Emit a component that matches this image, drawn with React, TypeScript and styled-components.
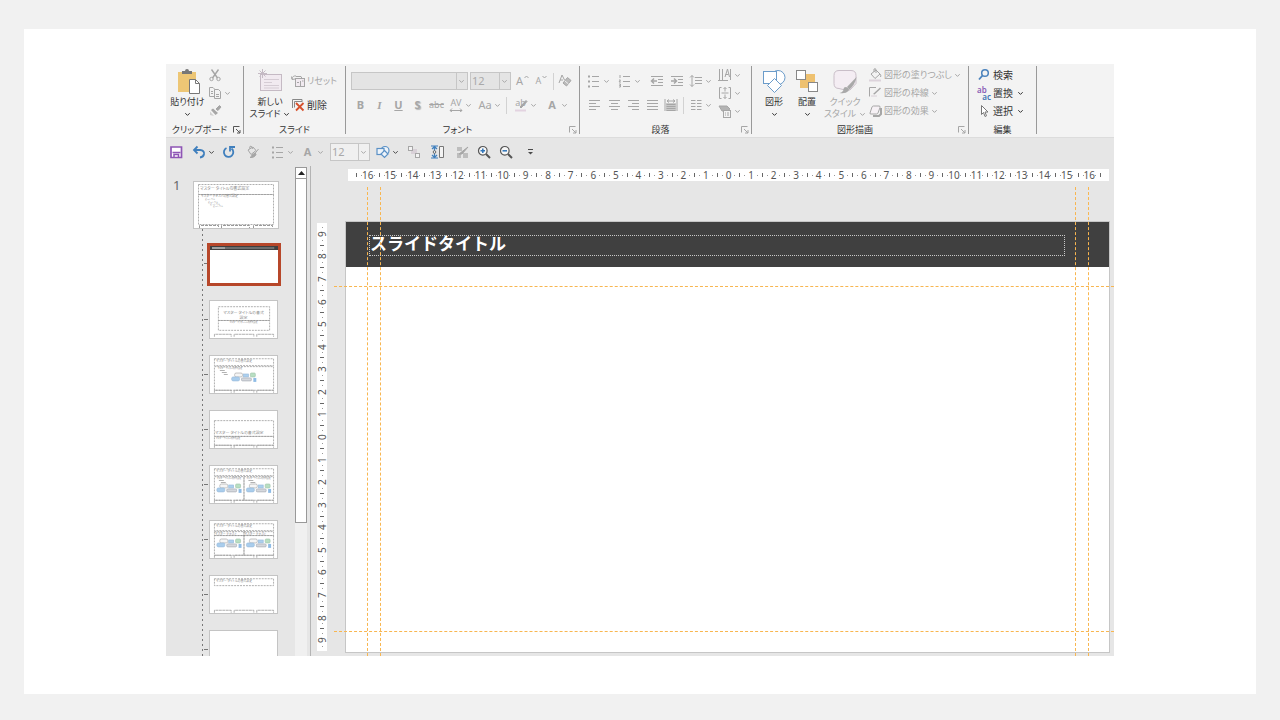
import React from "react";
import styled, { createGlobalStyle } from "styled-components";

const Global = createGlobalStyle`
  *, *::before, *::after { box-sizing: border-box; }
  body {
    margin: 0;
    background: #f1f1f1;
    color: #333;
    font-family: "Noto Sans", "Noto Sans CJK JP", sans-serif;
    font-size: 9px;
    line-height: 12px;
    font-feature-settings: "palt";
  }
  button, select { font: inherit; color: inherit; font-feature-settings: inherit; }
  ul { list-style: none; margin: 0; padding: 0; }
`;

/* ---------- page ---------- */

const Card = styled.main`
  margin: 29px 24px 26px;
  padding: 35px 142px 38px;
  background: #fff;
`;

const Window = styled.div`
  background: #e6e6e6;
`;

/* ---------- ribbon ---------- */

const Ribbon = styled.div`
  display: flex;
  height: 74px;
  background: #f3f3f3;
  border-bottom: 1px solid #dcdcdc;
`;

const Group = styled.section<{ $w: number }>`
  position: relative;
  flex: none;
  display: flex;
  flex-direction: column;
  width: ${(p) => p.$w}px;
  padding-top: 2px;
  &::after {
    content: "";
    position: absolute;
    right: 0;
    top: 2px;
    bottom: 3px;
    border-right: 1px solid #999;
  }
`;

const GroupBody = styled.div<{ $pad?: number }>`
  display: flex;
  flex: 1;
  padding-left: ${(p) => p.$pad ?? 4}px;
`;

const GroupFooter = styled.div`
  display: flex;
  align-items: center;
  height: 14px;
  padding-right: 1px;
`;

const GroupTitle = styled.h2`
  flex: 1;
  margin: 0;
  font-size: 9px;
  font-weight: 400;
  text-align: center;
  white-space: nowrap;
`;

const Launcher = styled.button`
  display: flex;
  width: 10px;
  padding: 0;
  border: 0;
  background: none;
`;

const Rows = styled.div`
  display: flex;
  flex-direction: column;
  gap: 6px;
  padding-top: 6px;
`;

const Stack = styled.div`
  display: flex;
  flex-direction: column;
  align-items: flex-start;
`;

const Row = styled.div`
  display: flex;
  align-items: center;
  height: 18px;
`;

const Divider = styled.span`
  width: 1px;
  height: 17px;
  margin: 0 2px;
  background: #d2d2d2;
`;

const Tool = styled.button<{ $w?: number; $tight?: boolean }>`
  flex: none;
  display: flex;
  align-items: center;
  justify-content: center;
  gap: ${(p) => (p.$tight ? 0 : 2)}px;
  width: ${(p) => p.$w ?? 18}px;
  height: 18px;
  padding: 0;
  border: 0;
  background: none;
  color: #4a4a4a;
  &:disabled { color: #a6a6a6; }
`;

const Item = styled.button`
  display: flex;
  align-items: center;
  gap: 2px;
  height: 18px;
  padding: 0;
  border: 0;
  background: none;
  white-space: nowrap;
  &:disabled { color: #a6a6a6; }
`;

const ItemText = styled.span<{ $large?: boolean }>`
  margin-right: ${(p) => (p.$large ? 2 : 0)}px;
  font-size: ${(p) => (p.$large ? 10 : 9)}px;
`;

const Big = styled.button<{ $w: number }>`
  flex: none;
  display: flex;
  flex-direction: column;
  align-items: center;
  width: ${(p) => p.$w}px;
  padding: 2px 0 0;
  border: 0;
  background: none;
  white-space: nowrap;
  &:disabled { color: #a6a6a6; }
  & > svg:first-child { margin-bottom: 2px; }
`;

const BigLine = styled.span`
  display: flex;
  align-items: center;
  justify-content: center;
  gap: 3px;
  height: 12px;
`;

const Glyph = styled.span<{ $bold?: boolean; $italic?: boolean; $line?: string; $small?: boolean; $w?: number }>`
  width: ${(p) => p.$w ?? 14}px;
  display: flex;
  justify-content: center;
  font-size: ${(p) => (p.$small ? 9 : 11)}px;
  font-weight: ${(p) => (p.$bold ? 700 : 400)};
  font-style: ${(p) => (p.$italic ? "italic" : "normal")};
  text-decoration: ${(p) => p.$line ?? "none"};
`;

const SerifGlyph = styled(Glyph)`
  font-family: "Liberation Serif", serif;
`;

const ShadowGlyph = styled(Glyph)`
  text-shadow: 1px 1px 1px #b5b5b5;
`;

/* Stacks a glyph and its decoration in the same icon cell. */
const Overlay = styled.span`
  display: grid;
  width: 14px;
  height: 14px;
  & > * { grid-area: 1 / 1; }
  & > span { line-height: 10px; }
`;

const SelectBox = styled.label<{ $w: number; $fill?: string }>`
  position: relative;
  display: flex;
  width: ${(p) => p.$w}px;
  height: 18px;
  border: 1px solid #c6c6c6;
  background: ${(p) => p.$fill ?? "#e4e4e4"};
  color: #a9a9a9;
  svg { position: absolute; right: 2px; top: 6px; }
  &::after {
    content: "";
    position: absolute;
    right: 10px;
    top: 0;
    bottom: 0;
    border-left: 1px solid #c6c6c6;
  }
  select {
    width: 100%;
    padding: 0 0 0 1px;
    border: 0;
    background: none;
    appearance: none;
    font-size: 11px;
    color: #a9a9a9;
    opacity: 1;
  }
`;

const FontRow = styled(Row)`
  gap: 2px;
`;

const Flush = styled.div`
  display: flex;
  align-items: center;
`;

/* ---------- quick access bar ---------- */

const QuickBar = styled.div`
  display: flex;
  align-items: center;
  height: 28px;
`;

const QuickSelect = styled.div`
  margin-left: 3px;
`;

/* ---------- workspace ---------- */

const Workspace = styled.div`
  display: flex;
`;

const ThumbPane = styled.nav`
  flex: none;
  display: flex;
  align-items: flex-start;
  width: 129px;
  contain: size;
  overflow: hidden;
`;

const MasterNumber = styled.span`
  width: 27px;
  padding: 12px 0 0 7px;
  font-size: 13px;
  line-height: 14px;
  color: #666;
`;

const Tree = styled.div`
  padding-top: 15px;
`;

const Branch = styled.ul`
  display: flex;
  flex-direction: column;
  gap: 16px;
  margin-left: 9px;
  padding-top: 14px;
  background: repeating-linear-gradient(#777 0 2px, transparent 2px 5px) 0 0 / 1px 100% no-repeat;
`;

const Leaf = styled.li`
  display: flex;
  align-items: center;
  &::before {
    content: "";
    width: 4px;
    margin: 0 1px 0 2px;
    border-top: 1px dashed #777;
  }
`;

const Thumb = styled.button<{ $selected?: boolean }>`
  display: block;
  padding: 0;
  border: ${(p) => (p.$selected ? "3px solid #b7472a" : "1px solid #c4c4c4")};
  margin: ${(p) => (p.$selected ? "0 0 -2px -2px" : "0")};
  background: #fff;
  svg { display: block; }
`;

const ScrollBar = styled.div`
  flex: none;
  display: flex;
  flex-direction: column;
  width: 12px;
  margin: 1px 3px 0 0;
  background: #f0f0f0;
`;

const ScrollButton = styled.button`
  display: flex;
  align-items: center;
  justify-content: center;
  height: 12px;
  padding: 0;
  border: 1px solid #999;
  background: #fff;
`;

const ScrollThumb = styled.div`
  height: 344px;
  border: 1px solid #999;
  border-top: 0;
  background: #fff;
`;

const Editor = styled.div`
  flex: 1;
  display: grid;
  grid-template-columns: 10px 1fr;
  grid-template-rows: 12px auto;
  gap: 41px 19px;
  padding: 3px 5px 4px 6px;
  border-left: 1px solid #b4b4b4;
`;

const RulerH = styled.div`
  grid-column: 2;
  display: flex;
  align-items: center;
  margin-left: 2px;
  padding: 0 8px;
  background: #fff;
`;

const RulerV = styled.div`
  display: flex;
  flex-direction: column;
  align-items: center;
  margin: 1px 0;
  background: #fff;
`;

const Tick = styled.i<{ $v?: boolean }>`
  flex: none;
  width: ${(p) => (p.$v ? 4 : 1)}px;
  height: ${(p) => (p.$v ? 1 : 4)}px;
  background: #666;
`;

const Unit = styled.span<{ $v?: boolean }>`
  flex: 1 1 0;
  display: flex;
  flex-direction: ${(p) => (p.$v ? "column" : "row")};
  align-items: center;
  justify-content: space-between;
  min-width: 0;
  padding: ${(p) => (p.$v ? "4px 0" : "0 4px")};
  &::before, &::after {
    content: "";
    width: 1px;
    height: 1px;
    background: #999;
  }
`;

const Num = styled.span<{ $v?: boolean }>`
  display: flex;
  align-items: center;
  justify-content: center;
  width: ${(p) => (p.$v ? "12px" : "0")};
  height: ${(p) => (p.$v ? "0" : "12px")};
  font-size: 10px;
  color: #555;
  writing-mode: ${(p) => (p.$v ? "vertical-rl" : "horizontal-tb")};
  transform: ${(p) => (p.$v ? "rotate(180deg)" : "none")};
`;

const Slide = styled.article`
  position: relative;
  aspect-ratio: 763 / 430;
  background: #fff;
  box-shadow: 0 0 0 1px #c6c6c6;
`;

const SlideHeader = styled.header`
  height: 45px;
  padding: 13px 44px 0 23px;
  background: #404040;
`;

const SlideTitle = styled.h1`
  height: 21px;
  margin: 0;
  border: 1px dotted #c8c8c8;
  color: #fff;
  font-family: "Noto Sans CJK JP", sans-serif;
  font-feature-settings: normal;
  font-size: 17px;
  font-weight: 700;
  line-height: 13px;
  white-space: nowrap;
`;

const GuideV = styled.i<{ $at: string }>`
  position: absolute;
  left: ${(p) => p.$at};
  top: -35px;
  bottom: -4px;
  border-left: 1px dashed #f8b650;
`;

const GuideH = styled.i<{ $at: string }>`
  position: absolute;
  top: ${(p) => p.$at};
  left: -12px;
  right: -5px;
  border-top: 1px dashed #f8b650;
`;

/* ---------- icons ---------- */

type IconProps = { w?: number; h?: number; children: React.ReactNode };
const Icon = ({ w = 14, h = 14, children }: IconProps) => (
  <svg width={w} height={h} viewBox={`0 0 ${w} ${h}`} fill="none" stroke="currentColor" aria-hidden="true">
    {children}
  </svg>
);

const Chevron = () => (
  <Icon w={7} h={5}>
    <path d="M1.3 1.2 3.5 3.4 5.7 1.2" />
  </Icon>
);

const LaunchIcon = ({ dim }: { dim?: boolean }) => (
  <Icon w={8} h={8}>
    <g stroke={dim ? "#a6a6a6" : "#555"}>
      <path d="M.5 6.5V.5h6M3 3l4 4M7 4v3H4" />
    </g>
  </Icon>
);

const PasteIcon = () => (
  <Icon w={26} h={26}>
    <rect x="3" y="4" width="18" height="20" fill="#edc675" stroke="none" />
    <path d="M7 6V3h3a2 2 0 0 1 4 0h3v3Z" fill="#777" stroke="none" />
    <path d="M14.500 11.500h6l4 4v10h-10Z" fill="#fff" stroke="#777" />
    <path d="M20.500 11.500v4h4" stroke="#777" />
  </Icon>
);
const CutIcon = () => (
  <Icon>
    <path d="M3.5 1.5 9.5 10M10.5 1.5 4.5 10" strokeWidth="1.4" />
    <circle cx="3.5" cy="11" r="1.7" />
    <circle cx="10.5" cy="11" r="1.7" />
  </Icon>
);
const CopyIcon = () => (
  <Icon>
    <path d="M1.500 1.500h3.500l2 2v7h-5.500Z" fill="#f3f3f3" />
    <path d="M6.500 3.500h4l2 2v7h-6Z" fill="#f3f3f3" />
    <path d="M8 8.500h3M8 10.500h3M3 5.500h2M3 7.500h2" />
  </Icon>
);
const BrushIcon = () => (
  <Icon>
    <path d="m8 5 3.500-3.500 1.500 1.500L10 6.500Z" fill="currentColor" />
    <path d="M5 4.500 10 9 7.500 11 3 6Z" fill="currentColor" stroke="none" />
    <path d="M2 7.500 6 12l-4-1Z" fill="#cfcfcf" stroke="none" />
  </Icon>
);
const NewSlideIcon = () => (
  <Icon w={26} h={26}>
    <g stroke="#c5bac4">
      <rect x="3.500" y="6.500" width="21" height="16" fill="#f1eaf0" />
      <path d="M7 11.500h15M7 14.500h8M7 17.500h15M7 20h15" stroke="#d5ccd4" />
      <path d="M5.500 1v9M1 5.500h9M2.500 2.500l6 6M8.500 2.500l-6 6" />
    </g>
  </Icon>
);
const ResetIcon = () => (
  <Icon>
    <rect x="4.500" y="4.500" width="9" height="8" fill="#f1eaf0" />
    <path d="M9.500 7v5M11 7h1.500M6 8.500h2M5 2.500h5l1 2M1 5a3.500 3.500 0 0 1 4-3M.5 2.500 1 5.500l3-.5" />
  </Icon>
);
const DeleteIcon = () => (
  <Icon>
    <path d="M1.500 10V1.500H11V4M3.500 9.500v-6H11" stroke="#888" />
    <path d="m5 5 7.500 7.500M12.500 5 5 12.500" stroke="#d6502c" strokeWidth="1.8" />
  </Icon>
);
const EraserIcon = () => (
  <Icon>
    <path d="M1 9 4 1l2.500 5M2 6h3" />
    <path d="m5 9 4.500-5.500L13 6.500 8.500 12Z" fill="#bbb" />
    <path d="m7 7 3.500 3" stroke="#eee" />
  </Icon>
);
const SpacingIcon = () => (
  <Icon>
    <path d="M1 12.500h12M3 10.500l-2 2 2 1.500M11 10.500l2 2-2 1.500" />
  </Icon>
);
const HighlightIcon = () => (
  <Icon>
    <path d="m6 9 6-6.500 1 1L7 10Z" fill="currentColor" />
    <path d="M1 12.500h11" stroke="#e3d3e0" strokeWidth="2" />
  </Icon>
);
const BulletsIcon = () => (
  <Icon>
    <path d="M5 2.500h7M5 7.500h7M5 12.500h7" />
    <path d="M1 2.500h2M1 7.500h2M1 12.500h2" strokeWidth="2" />
  </Icon>
);
const NumberingIcon = () => (
  <Icon>
    <path d="M5 2.500h7M5 7.500h7M5 12.500h7M2 1v3M1 6h1.500L1 8h2M1 10h1.500v1.500H1.500h1V13H1" />
  </Icon>
);
const IndentIcon = ({ out }: { out?: boolean }) => (
  <Icon>
    <path d="M1 2.500h12M8 5.500h5M8 8.500h5M1 11.500h12" />
    {out ? (
      <path d="M7 7H1.500M4 4.500 1.500 7 4 9.500" strokeWidth="1.500" />
    ) : (
      <path d="M1 7h5.500M4 4.500 6.500 7 4 9.500" strokeWidth="1.500" />
    )}
  </Icon>
);
const LineSpaceIcon = () => (
  <Icon>
    <path d="M6 3.500h7M6 6.500h7M6 9.500h7M3 1.500v11M1 3.500l2-2 2 2M1 10.500l2 2 2-2" />
  </Icon>
);
const AlignIcon = ({ kind }: { kind: "left" | "center" | "right" | "justify" }) => {
  const d = {
    left: "M2 2.500h11M2 5.500h7M2 8.500h11M2 11.500h7",
    center: "M2 2.500h11M4 5.500h7M2 8.500h11M4 11.500h7",
    right: "M2 2.500h11M6 5.500h7M2 8.500h11M6 11.500h7",
    justify: "M2 2.500h11M2 5.500h11M2 8.500h11M2 11.500h11",
  }[kind];
  return (
    <Icon>
      <path d={d} />
    </Icon>
  );
};
const DistributeIcon = () => (
  <Icon>
    <rect x="2" y="5" width="10" height="8" fill="#c9c9c9" stroke="none" />
    <path d="M1 1v12M13 1v12M3 3h8M5 1.500 3 3l2 1.500M9 1.500 11 3 9 4.500" />
    <path d="M2.500 6.500h9M2.500 8.500h9M2.500 10.500h9M2.500 12.500h9" />
  </Icon>
);
const ColumnsIcon = () => (
  <Icon>
    <path d="M2 2.500h4.500M2 5.500h4.500M2 8.500h4.500M2 11.500h4.500M8 2.500h4.500M8 5.500h4.500M8 8.500h4.500M8 11.500h4.500" />
  </Icon>
);
const TextDirIcon = () => (
  <Icon>
    <path d="M1.500 1v11M4.500 1v11M12.500 1v11M7 9l2.500-8 2 8M7.500 6.500h3M0 12.500h10" />
  </Icon>
);
const AlignTextIcon = () => (
  <Icon>
    <path d="M3.500 1.500h-2v11h2M10.500 1.500h2v11h-2M3.500 7h7M7 1.500v4M5.500 3 7 1.500 8.500 3M7 8.500v4M5.500 11 7 12.500 8.500 11" />
  </Icon>
);
const SmartArtIcon = () => (
  <Icon>
    <path d="M1 2h8l3 3-3 2H4Z" fill="#b3b3b3" />
    <rect x="5.500" y="6.500" width="7" height="7" fill="#f3f3f3" />
    <path d="M7 9h1M9 9h2M7 11h1M9 11h2" />
  </Icon>
);
const ShapesIcon = () => (
  <Icon w={26} h={26}>
    <g fill="#fff" stroke="#6b9cca">
      <circle cx="17" cy="9.500" r="7" />
      <rect x="2.500" y="3.500" width="13" height="12" />
      <path d="m13.500 10.500 7 7-7 7-7-7Z" />
    </g>
  </Icon>
);
const ArrangeIcon = () => (
  <Icon w={26} h={26}>
    <rect x="6" y="6" width="15" height="14" fill="#eec170" stroke="none" />
    <rect x="2.500" y="2.500" width="9" height="9" fill="#fff" stroke="#888" />
    <rect x="14.500" y="14.500" width="9" height="9" fill="#fff" stroke="#888" />
  </Icon>
);
const QuickStyleIcon = () => (
  <Icon w={26} h={26}>
    <path d="M7 2.500h12q5 0 5 5v8L18 22l-7-.500-4-1q-5 0-5-5v-8q0-5 5-5Z" fill="#f4edf3" stroke="#c9bec8" />
    <path d="M24.500 9 15 19l2.500 2.500Q23.500 16 24.500 9Z" fill="#a9a9a9" stroke="none" />
    <path d="M14 19q4 1 2.500 4-3 3-9 2 4-1 4-4 0-2 2.500-2Z" fill="#a9a9a9" stroke="none" />
  </Icon>
);
const FillIcon = () => (
  <Icon>
    <path d="m3 6 5-4 4 4-5 4.500Z" fill="#f3f3f3" />
    <path d="M6 4V1q2-1 2 1v3M12 6q1.500 2 .5 3" />
    <path d="M1 12.500h12" stroke="#dcd3db" strokeWidth="2" />
  </Icon>
);
const OutlineIcon = () => (
  <Icon>
    <path d="M8 1.500H1.500v9" />
    <path d="m5 8 7-6.500 1 1-6.500 6Z" fill="currentColor" stroke="none" />
    <path d="M3 10h6" stroke="#d8d0d7" />
  </Icon>
);
const EffectIcon = () => (
  <Icon>
    <path d="M5 12h6l2-2V4" strokeWidth="2" />
    <path d="m2 9 2-6q.5-1 1.500-1H11q1.500 0 1 1.500L10 9q-.5 1-1.500 1H3Q1.500 10 2 9Z" fill="#f6f1f5" />
  </Icon>
);
const SearchIcon = ({ sign }: { sign?: "+" | "-" }) =>
  sign ? (
    <Icon>
      <circle cx="5.800" cy="5.800" r="4.300" fill="#f7f7f7" stroke="#555" strokeWidth="1.200" />
      <path d="m9 9 4 4" stroke="#555" strokeWidth="2" />
      <path d={sign === "+" ? "M3.500 5.800H8M5.800 3.500V8" : "M3.500 5.800H8"} stroke="#2f74b8" strokeWidth="1.500" />
    </Icon>
  ) : (
    <Icon>
      <circle cx="8" cy="5" r="3.300" stroke="#4a82bd" strokeWidth="1.500" />
      <path d="M5.500 7.500 2 11.500" stroke="#4a82bd" strokeWidth="1.800" />
    </Icon>
  );
const ReplaceBox = styled.span`
  display: grid;
  width: 14px;
  font-size: 8px;
  font-weight: 600;
  line-height: 7px;
  color: #8a5bb5;
  span { text-align: left; }
  span:last-child { color: #3f76b5; text-align: right; }
`;
const SelectIcon = () => (
  <Icon>
    <path d="M4.500 1.500v9l2-2 1.500 4 1.500-.7L8 8h3Z" fill="#fff" stroke="#777" />
  </Icon>
);
const SaveIcon = () => (
  <Icon>
    <path d="M2 2h10.500v10.500H2Z" stroke="#8e55b5" strokeWidth="1.700" fill="#fff" />
    <path d="M3.500 7.500h8M5 12V9.500h4.500V12" stroke="#8e55b5" strokeWidth="1.500" />
  </Icon>
);
const UndoIcon = () => (
  <Icon>
    <path d="M2 5h6q4.500.5 4 4-.5 3-4 3.500M5.500 1.500 2 5l3.500 3.500" stroke="#3f7fbd" strokeWidth="1.800" />
  </Icon>
);
const RedoIcon = () => (
  <Icon>
    <path d="M4.500 3A4.700 4.700 0 1 0 9.500 3.500M8 6.500V2h5" stroke="#3f7fbd" strokeWidth="1.800" />
  </Icon>
);
const PaintIcon = () => (
  <Icon>
    <path d="m2 5 5-3 3 3.500-5 4ZM4 4q-1-3 1-3l2 3" />
    <path d="m12.500 4-4 5M9 8q2 1 0 3-2 2-5 1.500 2-1 2-2.500Z" fill="currentColor" />
  </Icon>
);
const SmallShapesIcon = () => (
  <Icon>
    <g fill="#eef4fa" stroke="#5b91c6" strokeWidth="1.200">
      <circle cx="9" cy="5.500" r="4" />
      <rect x="1" y="3.500" width="7" height="6" />
      <path d="m8.500 5.500 3.500 3.500-3.500 3.500L5 9Z" />
    </g>
  </Icon>
);
const GroupIcon = () => (
  <Icon>
    <rect x="4" y="4" width="6" height="5" fill="#d8d0d7" stroke="none" />
    <rect x="1.500" y="1.500" width="4" height="4" fill="#f3f3f3" />
    <rect x="8.500" y="8.500" width="4" height="4" fill="#f3f3f3" />
  </Icon>
);
const HeightIcon = () => (
  <Icon>
    <path d="M3.500 1.500v11M1 4l2.500-2.500L6 4M1 10l2.500 2.500L6 10M0 1h7M0 13h7" stroke="#3f7fbd" strokeWidth="1.200" />
    <path d="M8.500 1.500h4v11h-4Z" stroke="#777" fill="#f3f3f3" />
    <circle cx="3.500" cy="7" r="1.300" fill="#fff" stroke="#666" />
  </Icon>
);
const MergeIcon = () => (
  <Icon>
    <path d="M2 2h5v4H2ZM2 8h4v5H2ZM8 8h5v5H8Z" fill="#bdbdbd" stroke="none" />
    <path d="m4 9 9-7-6 7Z" fill="currentColor" />
  </Icon>
);

/* ---------- slide thumbnails ---------- */

const ThumbText = styled.text`
  fill: #8a8a8a;
  stroke: none;
`;

const MASTER = "マスター タイトルの書式設定";

const Dashed = ({ x, y, w, h }: { x: number; y: number; w: number; h: number }) => (
  <rect x={x + 0.5} y={y + 0.5} width={w} height={h} stroke="#8c8c8c" strokeDasharray="2 1" strokeWidth=".7" />
);

const Footers = ({ y }: { y: number }) => (
  <path d={`M4.500 ${y + 3}v-2.500h17v2.500M24.500 ${y + 3}v-2.500h20v2.500M47.500 ${y + 3}v-2.500h17v2.500`} stroke="#999" strokeWidth=".8" strokeDasharray="3 .5" />
);

const Content = ({ x, y }: { x: number; y: number }) => (
  <g stroke="none">
    <ThumbText x={x} y={y} fontSize="2">マスター テキストの書式設定</ThumbText>
    <path d={`M${x + 2} ${y + 1}h5v.7h-5ZM${x + 4} ${y + 3}h5v.7h-5ZM${x + 6} ${y + 5}h4v.7h-4Z`} fill="#999" />
  </g>
);

const Gallery = ({ x, y }: { x: number; y: number }) => (
  <g strokeWidth=".7">
    <rect x={x + 3} y={y} width="8" height="4" rx="1.500" fill="#f5f5f5" stroke="#aaa" />
    <rect x={x + 12} y={y + 1} width="5" height="3" fill="#acd0ee" stroke="#9bbcdc" />
    <rect x={x + 19} y={y} width="5" height="4" rx="1" fill="#b8dfc3" stroke="#a5c6ae" />
    <rect x={x} y={y + 4} width="8" height="4" rx="1.500" fill="#a9cdec" stroke="#9bbcdc" />
    <rect x={x + 10} y={y + 5} width="10" height="3" rx="1" fill="#d5d8dd" stroke="#a6abb4" />
    <rect x={x + 22} y={y + 5} width="3" height="4" fill="#8fbce6" stroke="none" />
  </g>
);

const TitleBar = () => (
  <>
    <Dashed x={4} y={2} w={60} h={7} />
    <ThumbText x="6" y="6" fontSize="3">{MASTER}</ThumbText>
  </>
);

const layouts: { name: string; art: React.ReactNode }[] = [
  {
    name: "タイトル スライド",
    art: (
      <>
        <Dashed x={8} y={5} w={52} h={14} />
        <Dashed x={8} y={19} w={52} h={10} />
        <ThumbText x="34" y="13" fontSize="4" textAnchor="middle">マスター タイトルの書式</ThumbText>
        <ThumbText x="34" y="18" fontSize="4" textAnchor="middle">設定</ThumbText>
        <ThumbText x="34" y="22" fontSize="2" textAnchor="middle">マスター サブタイトルの書式設定</ThumbText>
        <Footers y={33} />
      </>
    ),
  },
  {
    name: "タイトルとコンテンツ",
    art: (
      <>
        <TitleBar />
        <Dashed x={4} y={10} w={60} h={24} />
        <Content x={8} y={13} />
        <Gallery x={22} y={17} />
        <Footers y={34} />
      </>
    ),
  },
  {
    name: "セクション見出し",
    art: (
      <>
        <Dashed x={4} y={9} w={60} h={16} />
        <Dashed x={4} y={25} w={60} h={9} />
        <ThumbText x="5" y="23" fontSize="4">マスター タイトルの書式設定</ThumbText>
        <ThumbText x="6" y="28" fontSize="2">マスター テキストの書式設定</ThumbText>
        <Footers y={34} />
      </>
    ),
  },
  {
    name: "2 つのコンテンツ",
    art: (
      <>
        <TitleBar />
        <Dashed x={4} y={10} w={30} h={24} />
        <Dashed x={34} y={10} w={30} h={24} />
        <Content x={7} y={13} />
        <Content x={37} y={13} />
        <Gallery x={7} y={18} />
        <Gallery x={37} y={18} />
        <Footers y={34} />
      </>
    ),
  },
  {
    name: "比較",
    art: (
      <>
        <TitleBar />
        <Dashed x={4} y={10} w={30} h={4} />
        <Dashed x={34} y={10} w={30} h={4} />
        <Dashed x={4} y={14} w={30} h={20} />
        <Dashed x={34} y={14} w={30} h={20} />
        <ThumbText x="5" y="14" fontSize="3">マスター テキスト</ThumbText>
        <ThumbText x="35" y="14" fontSize="3">マスター テキスト</ThumbText>
        <Gallery x={7} y={18} />
        <Gallery x={37} y={18} />
        <Footers y={34} />
      </>
    ),
  },
  {
    name: "タイトルのみ",
    art: (
      <>
        <TitleBar />
        <Footers y={34} />
      </>
    ),
  },
  { name: "白紙", art: null },
];

/* ---------- ruler data ---------- */

const span = (n: number) => Array.from({ length: n * 2 + 1 }, (_, i) => Math.abs(i - n));

const Ruler = ({ max, vertical }: { max: number; vertical?: boolean }) => {
  const Bar = vertical ? RulerV : RulerH;
  return (
    <Bar>
      {!vertical && <Tick />}
      {span(max).map((n, i) => (
        <React.Fragment key={i}>
          {vertical && i > 0 && <Tick $v />}
          <Unit $v={vertical}>
            <Num $v={vertical}>{n}</Num>
          </Unit>
          {!vertical && <Tick />}
        </React.Fragment>
      ))}
    </Bar>
  );
};

type ToolProps = { label: string; w?: number; on?: boolean; menu?: boolean; tight?: boolean; children: React.ReactNode };
const T = ({ label, w, on, menu, tight, children }: ToolProps) => (
  <Tool $w={w} $tight={tight} aria-label={label} disabled={!on}>
    {children}
    {menu && <Chevron />}
  </Tool>
);

const Footer = ({ title, launch }: { title: string; launch?: "on" | "off" }) => (
  <GroupFooter>
    <GroupTitle>{title}</GroupTitle>
    {launch && (
      <Launcher aria-label={`${title}の設定`} disabled={launch === "off"}>
        <LaunchIcon dim={launch === "off"} />
      </Launcher>
    )}
  </GroupFooter>
);

export default function App() {
  return (
    <>
      <Global />
      <Card>
        <Window>
          <Ribbon>
            <Group $w={78}>
              <GroupBody $pad={3}>
                <Big $w={37}>
                  <PasteIcon />
                  <BigLine>貼り付け</BigLine>
                  <BigLine><Chevron /></BigLine>
                </Big>
                <Stack>
                  <T label="切り取り"><CutIcon /></T>
                  <T label="コピー" w={27} menu><CopyIcon /></T>
                  <T label="書式のコピー"><BrushIcon /></T>
                </Stack>
              </GroupBody>
              <Footer title="クリップボード" launch="on" />
            </Group>

            <Group $w={102}>
              <GroupBody $pad={5}>
                <Big $w={42}>
                  <NewSlideIcon />
                  <BigLine>新しい</BigLine>
                  <BigLine>スライド<Chevron /></BigLine>
                </Big>
                <Rows>
                  <Item disabled><ResetIcon /><ItemText>リセット</ItemText></Item>
                  <Item><DeleteIcon /><ItemText $large>削除</ItemText></Item>
                </Rows>
              </GroupBody>
              <Footer title="スライド" />
            </Group>

            <Group $w={234}>
              <GroupBody $pad={5}>
                <Rows>
                  <FontRow>
                    <SelectBox $w={117}>
                      <select aria-label="フォント名" disabled><option></option></select>
                      <Chevron />
                    </SelectBox>
                    <SelectBox $w={41}>
                      <select aria-label="フォント サイズ" disabled><option>12</option></select>
                      <Chevron />
                    </SelectBox>
                    <Flush>
                      <T label="フォント サイズの拡大" tight><Glyph $w={8}>A</Glyph><Icon w={5} h={14}><path d="M.5 4 2.500 2l2 2" /></Icon></T>
                      <T label="フォント サイズの縮小" w={20} tight><Glyph $small $w={7}>A</Glyph><Icon w={5} h={14}><path d="m.5 2 2 2 2-2" /></Icon></T>
                      <Divider />
                      <T label="書式のクリア"><EraserIcon /></T>
                    </Flush>
                  </FontRow>
                  <Row>
                    <T label="太字" w={19}><Glyph $bold>B</Glyph></T>
                    <T label="斜体" w={19}><SerifGlyph $italic $bold>I</SerifGlyph></T>
                    <T label="下線" w={19}><Glyph $bold $line="underline">U</Glyph></T>
                    <T label="文字の影" w={19}><ShadowGlyph $bold>S</ShadowGlyph></T>
                    <T label="取り消し線" w={19}><Glyph $small $line="line-through">abc</Glyph></T>
                    <T label="文字の間隔" w={29} menu>
                      <Overlay><Glyph $small>AV</Glyph><SpacingIcon /></Overlay>
                    </T>
                    <T label="文字種の変換" w={29} menu><Glyph>Aa</Glyph></T>
                    <Divider />
                    <T label="蛍光ペンの色" w={32} menu>
                      <Overlay><Glyph $small>ab</Glyph><HighlightIcon /></Overlay>
                    </T>
                    <T label="フォントの色" w={31} menu><Glyph $bold>A</Glyph></T>
                  </Row>
                </Rows>
              </GroupBody>
              <Footer title="フォント" launch="off" />
            </Group>

            <Group $w={172}>
              <GroupBody>
                <Rows>
                  <Row>
                    <T label="箇条書き" w={29} menu><BulletsIcon /></T>
                    <T label="段落番号" w={33} menu><NumberingIcon /></T>
                    <T label="インデントを減らす" w={22}><IndentIcon out /></T>
                    <T label="インデントを増やす"><IndentIcon /></T>
                    <T label="行間" w={29} menu><LineSpaceIcon /></T>
                  </Row>
                  <Row>
                    <T label="左揃え" w={20}><AlignIcon kind="left" /></T>
                    <T label="中央揃え" w={19}><AlignIcon kind="center" /></T>
                    <T label="右揃え" w={19}><AlignIcon kind="right" /></T>
                    <T label="両端揃え" w={19}><AlignIcon kind="justify" /></T>
                    <T label="均等割り付け" w={20}><DistributeIcon /></T>
                    <Divider />
                    <T label="段組み" w={29} menu><ColumnsIcon /></T>
                  </Row>
                </Rows>
                <Stack>
                  <T label="文字列の方向" w={29} menu><TextDirIcon /></T>
                  <T label="文字の配置" w={29} menu><AlignTextIcon /></T>
                  <T label="SmartArt に変換" w={29} menu><SmartArtIcon /></T>
                </Stack>
              </GroupBody>
              <Footer title="段落" launch="off" />
            </Group>

            <Group $w={217}>
              <GroupBody>
                <Big $w={36}>
                  <ShapesIcon />
                  <BigLine>図形</BigLine>
                  <BigLine><Chevron /></BigLine>
                </Big>
                <Big $w={30}>
                  <ArrangeIcon />
                  <BigLine>配置</BigLine>
                  <BigLine><Chevron /></BigLine>
                </Big>
                <Big $w={46} disabled>
                  <QuickStyleIcon />
                  <BigLine>クイック</BigLine>
                  <BigLine>スタイル<Chevron /></BigLine>
                </Big>
                <Stack>
                  <Item disabled><FillIcon /><ItemText>図形の塗りつぶし</ItemText><Chevron /></Item>
                  <Item disabled><OutlineIcon /><ItemText>図形の枠線</ItemText><Chevron /></Item>
                  <Item disabled><EffectIcon /><ItemText>図形の効果</ItemText><Chevron /></Item>
                </Stack>
              </GroupBody>
              <Footer title="図形描画" launch="off" />
            </Group>

            <Group $w={68}>
              <GroupBody $pad={8}>
                <Stack>
                  <Item><SearchIcon /><ItemText $large>検索</ItemText></Item>
                  <Item>
                    <ReplaceBox aria-hidden="true"><span>ab</span><span>ac</span></ReplaceBox>
                    <ItemText $large>置換</ItemText><Chevron />
                  </Item>
                  <Item><SelectIcon /><ItemText $large>選択</ItemText><Chevron /></Item>
                </Stack>
              </GroupBody>
              <Footer title="編集" />
            </Group>
          </Ribbon>

          <QuickBar>
            <T label="上書き保存" w={20} on><SaveIcon /></T>
            <T label="元に戻す" w={34} on menu><UndoIcon /></T>
            <T label="繰り返し" on><RedoIcon /></T>
            <T label="塗りつぶし" w={29}><PaintIcon /></T>
            <T label="箇条書き" w={30} menu><BulletsIcon /></T>
            <T label="フォントの色" w={30} menu><Glyph $bold>A</Glyph></T>
            <QuickSelect>
              <SelectBox $w={40} $fill="#f0f0f0">
                <select aria-label="サイズ" disabled><option>12</option></select>
                <Chevron />
              </SelectBox>
            </QuickSelect>
            <T label="図形" w={34} on menu><SmallShapesIcon /></T>
            <T label="グループ化" w={20}><GroupIcon /></T>
            <T label="高さを揃える" w={28} on><HeightIcon /></T>
            <T label="図形の結合" w={20}><MergeIcon /></T>
            <T label="拡大" w={24} on><SearchIcon sign="+" /></T>
            <T label="縮小" w={20} on><SearchIcon sign="-" /></T>
            <T label="クイック アクセスのカスタマイズ" w={28} on>
              <Icon w={7} h={8}>
                <path d="M1 1.500h5" />
                <path d="M1 4h5L3.500 6.500Z" fill="currentColor" stroke="none" />
              </Icon>
            </T>
          </QuickBar>

          <Workspace>
            <ThumbPane aria-label="スライド一覧">
              <MasterNumber>1</MasterNumber>
              <Tree>
                <Thumb aria-label="スライド マスター">
                  <svg width="84" height="46" viewBox="0 0 84 46" fill="none">
                    <Dashed x={4} y={2} w={75} h={10} />
                    <Dashed x={4} y={12} w={75} h={30} />
                    <ThumbText x="6" y="8" fontSize="4">{MASTER}</ThumbText>
                    <ThumbText x="7" y="15" fontSize="3">マスター テキストの書式設定</ThumbText>
                    <ThumbText x="11" y="18" fontSize="2">第 2 レベル</ThumbText>
                    <ThumbText x="14" y="21" fontSize="2">第 3 レベル</ThumbText>
                    <ThumbText x="16" y="23" fontSize="2">第 4 レベル</ThumbText>
                    <ThumbText x="19" y="25" fontSize="2">第 5 レベル</ThumbText>
                    <path d="M5.500 46v-2.500h19v2.500M27.500 46v-2.500h28v2.500M59.500 46v-2.500h19v2.500" stroke="#999" strokeDasharray="3 1" />
                  </svg>
                </Thumb>
                <Branch>
                  <Leaf>
                    <Thumb $selected aria-label="スライドタイトル" aria-current="true">
                      <svg width="68" height="37" viewBox="0 0 68 37" fill="none">
                        <rect width="68" height="4" fill="#404040" />
                        <path d="M2 2h13" stroke="#fff" />
                        <path d="M15 1.500h49v1H15" stroke="#999" strokeWidth=".5" />
                      </svg>
                    </Thumb>
                  </Leaf>
                  {layouts.map((l) => (
                    <Leaf key={l.name}>
                      <Thumb aria-label={l.name}>
                        <svg width="67" height="37" viewBox="0 0 68 37" fill="none">{l.art}</svg>
                      </Thumb>
                    </Leaf>
                  ))}
                </Branch>
              </Tree>
            </ThumbPane>
            <ScrollBar>
              <ScrollButton aria-label="上へスクロール">
                <Icon w={7} h={4}><path d="M0 4 3.500 0 7 4Z" fill="#222" stroke="none" /></Icon>
              </ScrollButton>
              <ScrollThumb />
            </ScrollBar>

            <Editor>
              <Ruler max={16} />
              <Ruler max={9} vertical />
              <Slide>
                <SlideHeader>
                  <SlideTitle>スライドタイトル</SlideTitle>
                </SlideHeader>
                <GuideV $at="2.7%" />
                <GuideV $at="4.5%" />
                <GuideV $at="95.500%" />
                <GuideV $at="97.300%" />
                <GuideH $at="14.800%" />
                <GuideH $at="95.200%" />
              </Slide>
            </Editor>
          </Workspace>
        </Window>
      </Card>
    </>
  );
}
